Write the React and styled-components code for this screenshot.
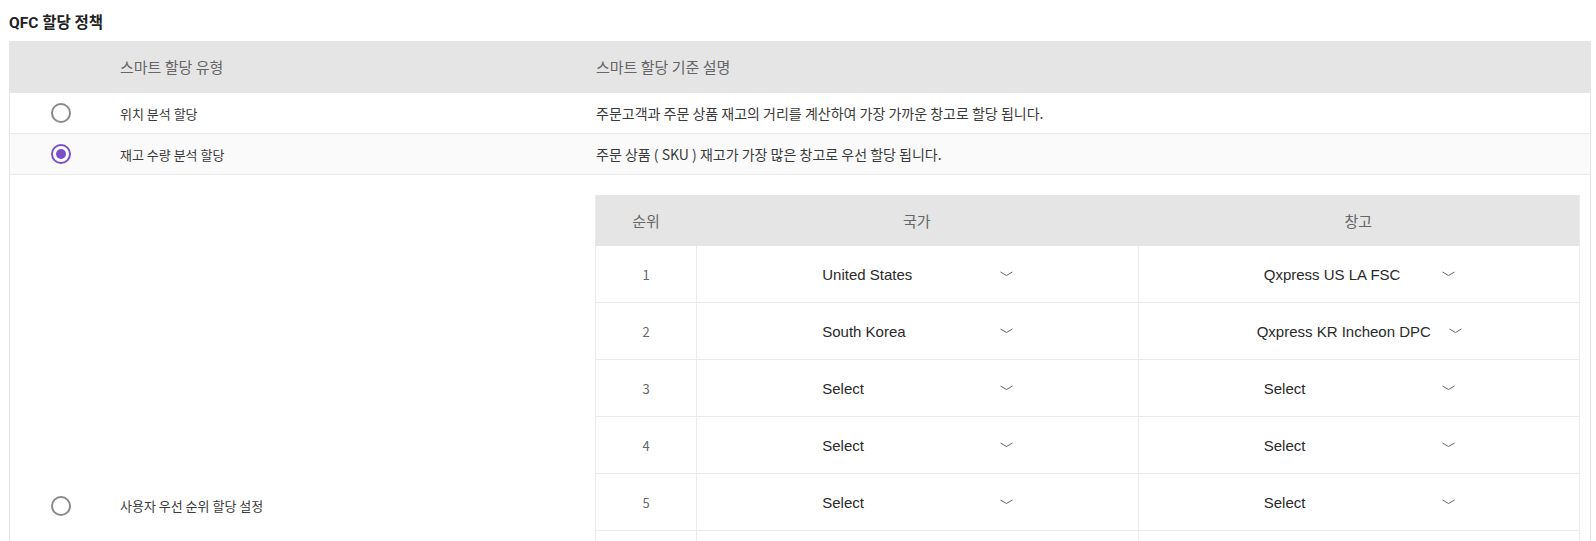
import styled, { createGlobalStyle } from "styled-components";

const GlobalStyle = createGlobalStyle`
  html, body {
    margin: 0;
    padding: 0;
    background: #fff;
  }
  body {
    font-family: Roboto, "Noto Sans CJK KR", sans-serif;
    color: #333;
  }
`;

const Page = styled.div`
  width: 1596px;
`;

const Title = styled.h2`
  margin: 0;
  height: 41px;
  padding-left: 9px;
  display: flex;
  align-items: center;
  font-family: Roboto, "Noto Sans CJK KR", sans-serif;
  font-size: 15.5px;
  font-weight: 700;
  color: #222;
`;

const Policy = styled.div`
  margin: 0 5px 0 9px;
  border-left: 1px solid #e6e6e6;
  border-right: 1px solid #e6e6e6;
`;

const PolicyRow = styled.div`
  display: grid;
  grid-template-columns: 101px 476px 1fr;
  min-height: ${(p) => p.$height || 40}px;
  background: ${(p) => (p.$head ? "#e5e5e5" : p.$shade ? "#fafafa" : "#fff")};
  border-bottom: 1px solid ${(p) => (p.$head ? "#e5e5e5" : "#ebebeb")};
  font-family: "Noto Sans CJK KR", sans-serif;
`;

const Cell = styled.div`
  display: flex;
  align-items: center;
  justify-content: ${(p) => (p.$center ? "center" : "flex-start")};
  padding: ${(p) => (p.$pad ? p.$pad : "0 0 0 9px")};
  font-size: ${(p) => p.$size || 14}px;
  color: ${(p) => p.$color || "#3a3a3a"};
`;

const Radio = styled.span`
  box-sizing: border-box;
  width: 20px;
  height: 20px;
  border-radius: 50%;
  border: 2px solid ${(p) => (p.$checked ? "#7c4fc8" : "#8a8a8a")};
  display: flex;
  align-items: center;
  justify-content: center;
  background: #fff;
  &::after {
    content: "";
    width: 10px;
    height: 10px;
    border-radius: 50%;
    background: ${(p) => (p.$checked ? "#7c4fc8" : "transparent")};
  }
`;

const Priority = styled.div`
  flex: 1;
  border-left: 1px solid #ebebeb;
  border-right: 1px solid #ebebeb;
`;

const PriorityRow = styled.div`
  display: grid;
  grid-template-columns: 100px 1fr 1fr;
  height: ${(p) => (p.$head ? 51 : 56)}px;
  background: ${(p) => (p.$head ? "#e5e5e5" : "#fff")};
  border-bottom: ${(p) => (p.$head ? "0" : "1px solid #ebebeb")};
`;

const PCell = styled.div`
  display: flex;
  align-items: center;
  justify-content: center;
  border-left: ${(p) => (p.$first || p.$head ? "0" : "1px solid #ebebeb")};
  font-family: "Noto Sans CJK KR", sans-serif;
  font-size: ${(p) => (p.$head ? 15 : 13)}px;
  color: #666;
`;

const Select = styled.div`
  box-sizing: border-box;
  display: inline-flex;
  align-items: center;
  justify-content: space-between;
  gap: 18px;
  min-width: 200px;
  padding: 0 4px 0 5px;
  font-family: "Liberation Sans", Arial, sans-serif;
  font-size: 15px;
  color: #2a2a2a;
`;

const Chevron = () => (
  <svg width="13" height="6" viewBox="0 0 13 6" fill="none">
    <polyline points="0.5,1 6.5,4.5 12.5,1" stroke="#666" strokeWidth="1" />
  </svg>
);

const ranks = [
  { country: "United States", wh: "Qxpress US LA FSC" },
  { country: "South Korea", wh: "Qxpress KR Incheon DPC" },
  ...Array.from({ length: 8 }, () => ({ country: "Select", wh: "Select" })),
];

const App = () => (
  <Page>
    <GlobalStyle />
    <Title>QFC 할당 정책</Title>
    <Policy>
      <PolicyRow $head $height={51}>
        <Cell />
        <Cell $size={15} $color="#666">스마트 할당 유형</Cell>
        <Cell $size={15} $color="#666">스마트 할당 기준 설명</Cell>
      </PolicyRow>
      <PolicyRow>
        <Cell $center $pad="0">
          <Radio />
        </Cell>
        <Cell $size={13}>위치 분석 할당</Cell>
        <Cell>주문고객과 주문 상품 재고의 거리를 계산하여 가장 가까운 창고로 할당 됩니다.</Cell>
      </PolicyRow>
      <PolicyRow $shade>
        <Cell $center $pad="0">
          <Radio $checked />
        </Cell>
        <Cell $size={13}>재고 수량 분석 할당</Cell>
        <Cell>주문 상품 ( SKU ) 재고가 가장 많은 창고로 우선 할당 됩니다.</Cell>
      </PolicyRow>
      <PolicyRow>
        <Cell $center $pad="0">
          <Radio />
        </Cell>
        <Cell $size={13}>사용자 우선 순위 할당 설정</Cell>
        <Cell $pad="20px 10px 20px 8px">
          <Priority>
            <PriorityRow $head>
              <PCell $head>순위</PCell>
              <PCell $head>국가</PCell>
              <PCell $head>창고</PCell>
            </PriorityRow>
            {ranks.map((r, i) => (
              <PriorityRow key={i}>
                <PCell $first>{i + 1}</PCell>
                <PCell>
                  <Select>
                    <span>{r.country}</span>
                    <Chevron />
                  </Select>
                </PCell>
                <PCell>
                  <Select>
                    <span>{r.wh}</span>
                    <Chevron />
                  </Select>
                </PCell>
              </PriorityRow>
            ))}
          </Priority>
        </Cell>
      </PolicyRow>
    </Policy>
  </Page>
);

export default App;
